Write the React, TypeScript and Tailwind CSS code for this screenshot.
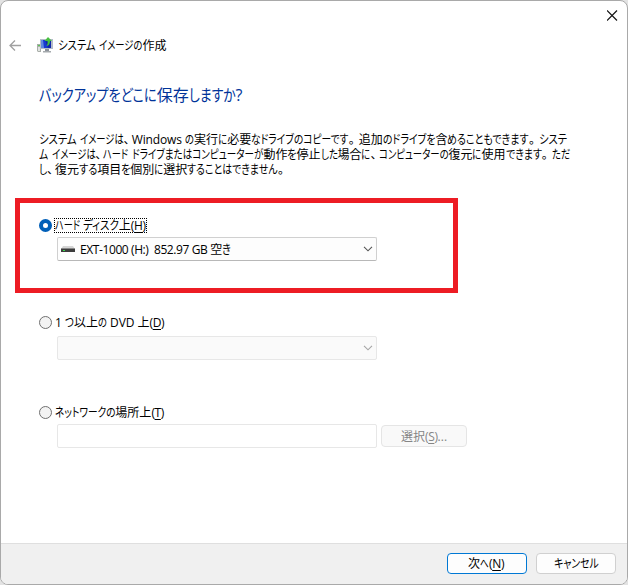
import { useLayoutEffect, useRef, useState } from 'react';
import type { ReactNode } from 'react';

// かな1文字あたりの幅(em)
function kanaWidth(ch: string) {
    if ('ァィゥェォッャュョっゃゅょ'.includes(ch)) return 0.6;
    if (ch === 'ー') return 0.66;
    if ('イドトリし'.includes(ch)) return 0.66;
    if (/[ぁ-ん]/.test(ch)) return 0.755;
    return 0.785;
}

// UIフォント風に、かなだけ幅を狭めて表示する
function Kana({ text }: { text: string }) {
    const ref = useRef<HTMLSpanElement>(null);
    const [natural, setNatural] = useState(text.length * 12);
    const [scale, setScale] = useState(1);
    const width = [...text].reduce((sum, ch) => sum + kanaWidth(ch), 0);

    useLayoutEffect(() => {
        const el = ref.current;
        if (!el) return;
        const size = parseFloat(getComputedStyle(el.parentElement!).fontSize);
        setNatural(el.offsetWidth);
        setScale((width * size) / el.offsetWidth);
    }, [width]);

    return (
        <span className="inline-block" style={{ width: `${width}em` }}>
            <span
                ref={ref}
                className="inline-block origin-left text-[1.03em] [font-feature-settings:'palt']"
                style={{ marginRight: `${natural * (scale - 1)}px`, transform: `scaleX(${scale})` }}
            >
                {text}
            </span>
        </span>
    );
}

function Jp({ children }: { children: string }) {
    const parts = children.split(/([ぁ-んァ-ヶー]+|[、。]|[A-Za-z0-9]+)/);
    return (
        <>
            {parts.map((part, i) => {
                if (!part) return null;
                if (part === '、') return <span key={i} className="inline-block w-[0.68em]">{part}</span>;
                if (part === '。') return <span key={i} className="inline-block w-[0.82em]">{part}</span>;
                if (/[A-Za-z0-9]/.test(part)) return <span key={i} className="inline-block tracking-[-0.01em]">{part}</span>;
                return i % 2 === 1
                    ? <Kana key={i} text={part} />
                    : <span key={i} className="inline-block whitespace-pre">{part}</span>;
            })}
        </>
    );
}

function Radio({ checked = false }: { checked?: boolean }) {
    return (
        <span
            className={
                checked
                    ? 'w-[13px] h-[13px] shrink-0 rounded-full border-4 border-[#005fb8] bg-white'
                    : 'w-[13px] h-[13px] shrink-0 rounded-full border border-[#707070] bg-[#f3f3f3]'
            }
        />
    );
}

function Chevron({ className }: { className: string }) {
    return (
        <svg width="10" height="6" viewBox="0 0 10 6" fill="none" stroke="currentColor" strokeWidth="1.1" className={className}>
            <path d="M1 .8 5 4.8 9 .8" />
        </svg>
    );
}

function BackupIcon() {
    return (
        <svg width="16" height="16" viewBox="0 0 16 16">
            <path d="M0 7h4v8H1L0 14z" fill="#a9aea9" />
            <path d="M1 8h2v1H1z" fill="#58c850" />
            <path d="M1 10h2v4H1z" fill="#dfe3df" />
            <path d="M3 2h13v10H3z" fill="#b4bbc8" />
            <path d="M4 3h10v8H4z" fill="#1028a8" />
            <path d="M4 3h4l3 8H4z" fill="#1838d0" />
            <path d="M4 3h2l1 8H4z" fill="#6088e0" />
            <path d="M8 12h4v2H8z" fill="#8c929a" />
            <path d="M6 14h8v1.500H6z" fill="#a5aaad" />
            <path d="M11 0 15 4h-2c0 3-1 4.500-3.500 5C10.500 7.500 11 6 10.500 4H7.500z" fill="#48c040" />
        </svg>
    );
}

function DriveIcon() {
    return (
        <svg width="14" height="7" viewBox="0 0 14 7">
            <path d="M2 0h10l2 3H0z" fill="#d5d5d5" />
            <path d="M0 2.500h14V6H0z" fill="#3c3c3c" />
            <path d="M2 4h2v1H2z" fill="#35d848" />
        </svg>
    );
}

function Key({ children }: { children: ReactNode }) {
    return <span className="tracking-[-0.03em]">(<span className="underline underline-offset-2">{children}</span>)</span>;
}

export default function App() {
    return (
        <div className="w-[628px] h-[585px] bg-[#e3e3e3] font-['Open_Sans','Noto_Sans_CJK_JP',sans-serif] text-[12px] leading-[15px] text-black whitespace-nowrap">
            <div className="w-full h-full rounded-[8px] border border-[#a9a9a9] bg-white overflow-hidden flex flex-col">
                <div className="h-[29px] flex justify-end pt-[9px] pr-[9px]">
                    <svg width="11" height="11" viewBox="0 0 11 11" stroke="#111" strokeWidth="1.2">
                        <path d="M0 .5 10 10.500M10 .5 0 10.500" />
                    </svg>
                </div>
                <div className="h-[31px] flex items-center pl-[8px]">
                    <svg width="12" height="12" viewBox="0 0 12 12" fill="none" stroke="#a0a0a0" strokeWidth="1.300">
                        <path d="M12 5.500H1M6 .5 1 5.500l5 5" />
                    </svg>
                    <div className="ml-[16px] -mt-[1px]"><BackupIcon /></div>
                    <h1 className="ml-[5px]"><Jp>システム イメージの作成</Jp></h1>
                </div>

                <main className="flex-1 pl-[38px]">
                    <h2 className="mt-[22px] h-[24px] leading-[24px] text-[16px] text-[#003399]"><Jp>バックアップをどこに保存しますか?</Jp></h2>
                    <div className="mt-[25px] h-[45px]">
                        <p className="h-[15px]"><Jp>システム イメージは、Windows の実行に必要なドライブのコピーです。追加のドライブを含めることもできます。システ</Jp></p>
                        <p className="h-[15px]"><Jp>ム イメージは、ハード ドライブまたはコンピューターが動作を停止した場合に、コンピューターの復元に使用できます。ただ</Jp></p>
                        <p className="h-[15px]"><Jp>し、復元する項目を個別に選択することはできません。</Jp></p>
                    </div>

                    {/* 選択中の保存先 */}
                    <section className="-ml-[24px] mt-[21px] w-[443px] h-[95px] border-[5px] border-[#ed1c24] pl-[19px] pt-[14px]">
                        <div className="h-[17px] flex items-center">
                            <Radio checked />
                            <label className="ml-[2px] h-[15px] px-px outline-1 outline-dotted outline-black -outline-offset-1"><Jp>ハード ディスク上</Jp><Key>H</Key></label>
                        </div>
                        <div className="ml-[18px] mt-[3px] w-[320px] h-[24px] rounded-[2px] border border-[#d0d0d0] border-b-[#b8b8b8] bg-[#fdfdfd] flex items-center pl-[3px] pr-[3px]">
                            <DriveIcon />
                            <span className="ml-[5px]"><span className="tracking-[-0.4px]">EXT-1000 (H:)&nbsp; 852.97 GB </span><Jp>空き</Jp></span>
                            <Chevron className="ml-auto text-[#555]" />
                        </div>
                    </section>

                    <section className="mt-[21px]">
                        <div className="h-[17px] flex items-center">
                            <Radio />
                            <label className="ml-[3px]"><Jp>1 つ以上の DVD 上</Jp><Key>D</Key></label>
                        </div>
                        <div className="ml-[18px] mt-[5px] w-[320px] h-[24px] rounded-[2px] border border-[#e7e7e7] bg-[#fafafa] flex items-center justify-end pr-[3px]">
                            <Chevron className="text-[#a5a5a5]" />
                        </div>
                    </section>

                    <section className="mt-[44px]">
                        <div className="h-[17px] flex items-center">
                            <Radio />
                            <label className="ml-[3px]"><Jp>ネットワークの場所上</Jp><Key>T</Key></label>
                        </div>
                        <div className="ml-[18px] mt-[3px] flex items-center gap-[4px]">
                            <div className="w-[320px] h-[24px] rounded-[2px] border border-[#e7e7e7] bg-white" />
                            <button className="w-[86px] h-[22px] rounded-[4px] border border-[#e5e5e5] bg-[#f9f9f9] text-[#858585]"><Jp>選択</Jp><Key>S</Key>...</button>
                        </div>
                    </section>
                </main>

                <footer className="h-[41px] shrink-0 border-t border-[#dfdfdf] bg-[#f0f0f0] flex justify-end items-start gap-[9px] pt-[9px] pr-[11px]">
                    <button className="w-[80px] h-[21px] rounded-[4px] border border-[#0078d4] bg-[#fdfdfd] pr-[2px]"><Jp>次へ</Jp><Key>N</Key></button>
                    <button className="w-[80px] h-[21px] rounded-[4px] border border-[#d0d0d0] bg-[#fdfdfd]"><Jp>キャンセル</Jp></button>
                </footer>
            </div>
        </div>
    );
}
